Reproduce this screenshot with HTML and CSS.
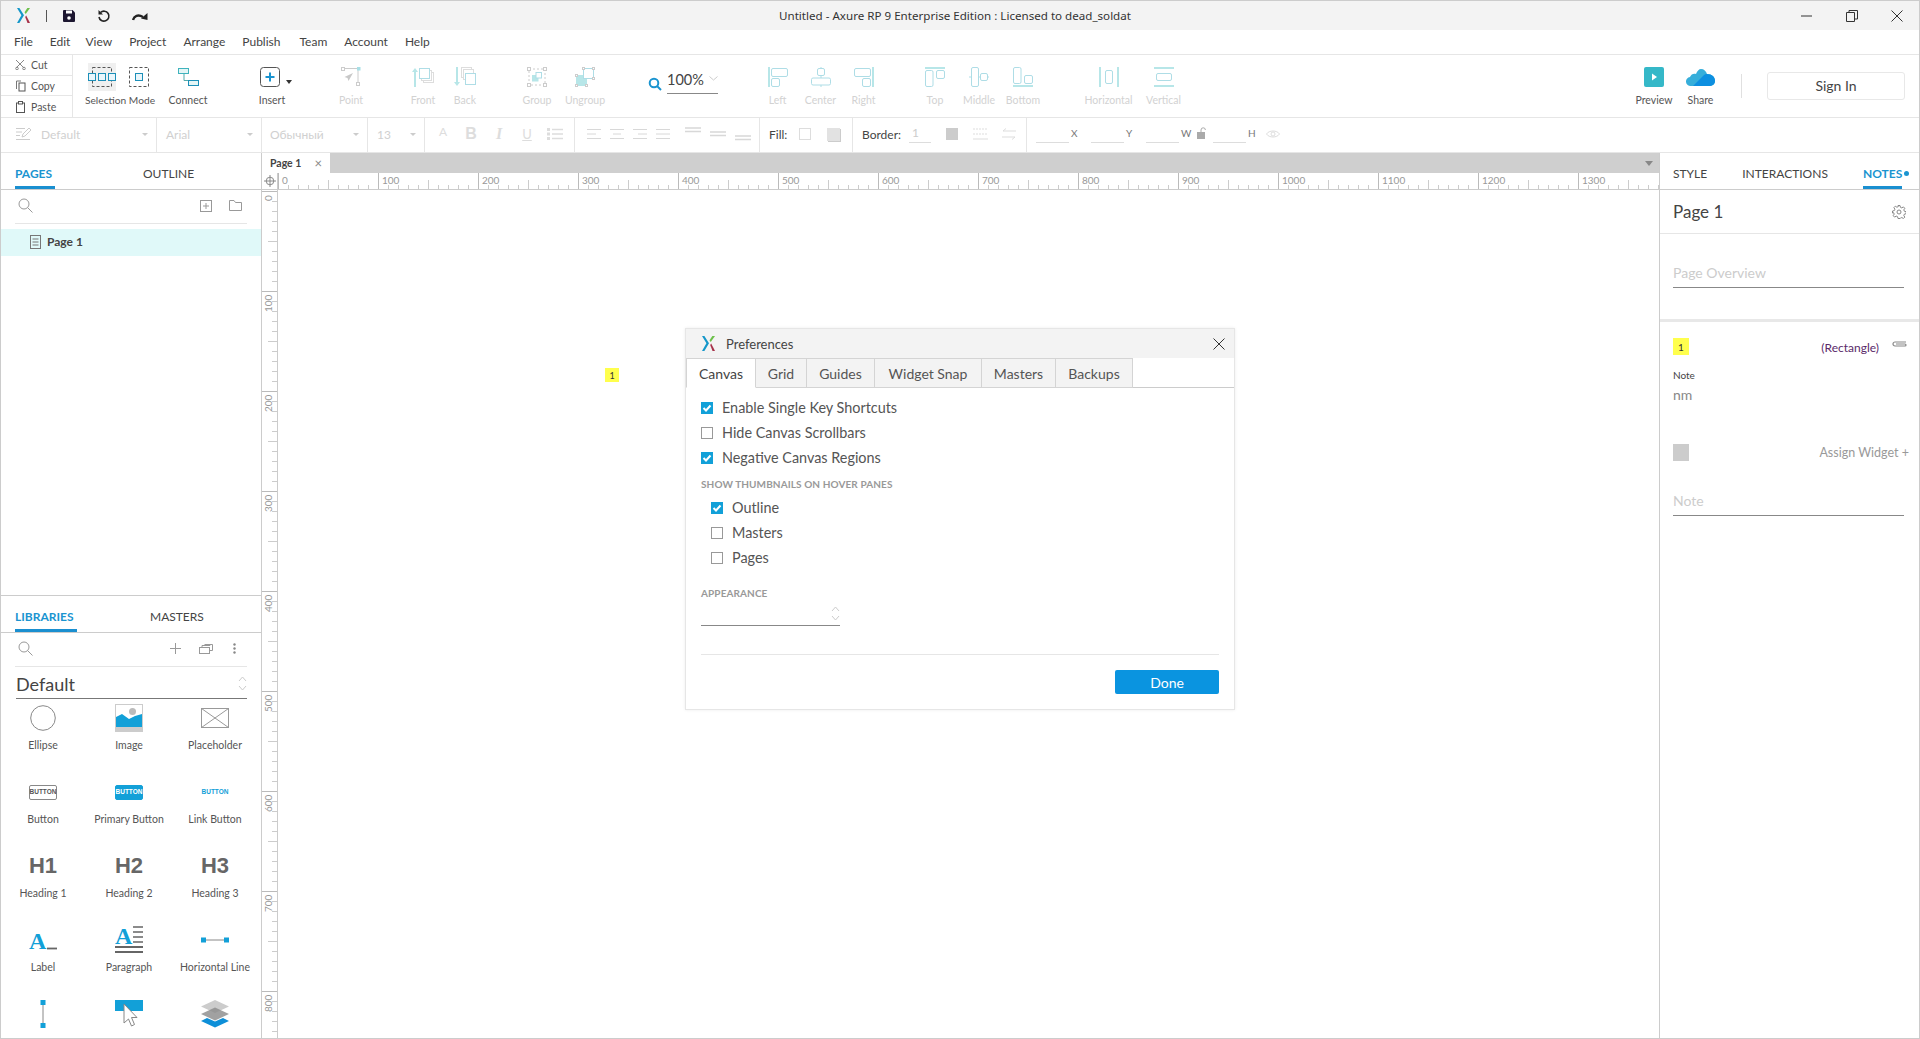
FILE: index.html
```html
<!DOCTYPE html>
<html lang="en">

<head>
  <meta charset="UTF-8">
  <title>Untitled - Axure RP 9</title>
  <link rel="stylesheet" href="styles.css">
</head>

<body>
  <div class="window">
    <header class="titlebar">
      <svg class="logo" width="13" height="15" viewBox="0 0 13 15"><path d="M0 0h2.400L7 7.300 2.400 15H0l4.400-7.700z" fill="#1597c9"/><path d="M10.400 0H13L8.700 6 7.500 4.300z" fill="#6cc04a"/><path d="M8.200 9l1-1.500L13 15h-2.500z" fill="#a8324a"/></svg>
      <span class="title-sep"></span>
      <svg class="tb-save" width="14" height="14" viewBox="0 0 14 14"><path d="M2 1h8.500L13 3.500V12a1 1 0 0 1-1 1H2a1 1 0 0 1-1-1V2a1 1 0 0 1 1-1z" fill="#1c1630"/><rect x="4" y="1.500" width="6" height="3" fill="#fff"/><circle cx="7" cy="9" r="1.800" fill="#fff"/></svg>
      <svg class="tb-undo" width="14" height="14" viewBox="0 0 14 14"><path d="M3.500 3.500A5 5 0 1 1 2 8" fill="none" stroke="#222" stroke-width="1.600"/><path d="M1.500 1v4.500H6z" fill="#222"/></svg>
      <svg class="tb-redo" width="16" height="10" viewBox="0 0 16 10"><path d="M1 9c1-4 5-6 10-3" fill="none" stroke="#222" stroke-width="2.400"/><path d="M15.500 9V2L9 7.500z" fill="#222"/></svg>
      <span class="title-text">Untitled - Axure RP 9 Enterprise Edition : Licensed to dead_soldat</span>
      <div class="win-controls">
        <svg width="12" height="12" viewBox="0 0 12 12"><path d="M0 6h11" stroke="#333"/></svg>
        <svg width="12" height="12" viewBox="0 0 12 12"><path d="M.5 2.500h8v9h-8zM3 2.500V.5h8.500v8.500H8.500" fill="none" stroke="#333"/></svg>
        <svg width="12" height="12" viewBox="0 0 12 12"><path d="M.5.500l11 11M11.500.5l-11 11" stroke="#333"/></svg>
      </div>
    </header>

    <nav class="menubar">
      <a>File</a><a>Edit</a><a>View</a><a>Project</a><a>Arrange</a><a>Publish</a><a>Team</a><a>Account</a><a>Help</a>
    </nav>

    <div class="toolbar">
      <div class="clipboard">
        <div class="clip-row"><svg width="12" height="11" viewBox="0 0 12 11"><path d="M1 1l8 8M9 1L1 9" stroke="#888" fill="none"/><circle cx="2" cy="9.500" r="1.300" fill="none" stroke="#888"/><circle cx="9" cy="9.500" r="1.300" fill="none" stroke="#888"/></svg>Cut</div>
        <div class="clip-row"><svg width="12" height="12" viewBox="0 0 12 12"><path d="M1.500 9V1H6" fill="none" stroke="#777"/><rect x="4" y="3" width="6" height="8" fill="none" stroke="#555"/></svg>Copy</div>
        <div class="clip-row"><svg width="12" height="12" viewBox="0 0 12 12"><rect x="1.500" y="2" width="8" height="9.500" fill="none" stroke="#555"/><rect x="3.500" y=".5" width="4" height="2.500" fill="#fff" stroke="#555"/></svg>Paste</div>
      </div>

      <div class="tool tool-select">
        <div class="tool-icon">
          <span class="active-mode">
            <svg width="28" height="20" viewBox="0 0 28 20"><rect x="4.500" y=".5" width="19" height="19" fill="none" stroke="#555" stroke-dasharray="3 2"/><g fill="#eaf6fb" stroke="#1c8fb8"><rect x=".5" y="6.500" width="7" height="7"/><rect x="10.500" y="6.500" width="7" height="7"/><rect x="20.500" y="6.500" width="7" height="7"/></g></svg>
          </span>
          <svg class="second-mode" width="20" height="20" viewBox="0 0 20 20"><rect x=".5" y=".5" width="19" height="19" fill="none" stroke="#555" stroke-dasharray="3 2"/><rect x="6.500" y="6.500" width="7" height="7" fill="#eaf6fb" stroke="#1c8fb8"/></svg>
        </div>
        <span class="tool-label">Selection Mode</span>
      </div>
      <div class="tool tool-connect">
        <div class="tool-icon"><svg width="21" height="19" viewBox="0 0 21 19"><path d="M6 6v6.500h9" fill="none" stroke="#5aa"/><rect x=".5" y=".5" width="10" height="5" fill="#e4f6f6" stroke="#3fb3bd"/><rect x="10.500" y="12.500" width="10" height="5" fill="#e4f6f6" stroke="#1c8fb8"/></svg></div>
        <span class="tool-label">Connect</span>
      </div>
      <div class="tool tool-insert">
        <div class="tool-icon">
          <svg width="20" height="20" viewBox="0 0 20 20"><rect x=".5" y=".5" width="19" height="19" rx="3" fill="none" stroke="#555"/><path d="M10 5.500v9M5.500 10h9" stroke="#1a94d0" stroke-width="2"/></svg>
          <span class="insert-caret"></span>
        </div>
        <span class="tool-label">Insert</span>
      </div>
      <div class="tool tool-point off">
        <div class="tool-icon"><svg width="20" height="20" viewBox="0 0 20 20"><path d="M3 1.500h14v14" fill="none" stroke="#ccc"/><rect x=".5" y=".5" width="3" height="3" fill="#fff" stroke="#ccc"/><rect x="16" y="0" width="3.500" height="3.500" fill="#a8dfe6"/><rect x="15.500" y="15.500" width="3" height="3" fill="#fff" stroke="#ccc"/><path d="M12 6L3.500 10l3 1 1 3z" fill="#c8c8c8"/></svg></div>
        <span class="tool-label">Point</span>
      </div>
      <div class="tool tool-front off">
        <div class="tool-icon"><svg width="22" height="22" viewBox="0 0 22 22"><path d="M3 21V4" stroke="#b7e6e8" stroke-width="2"/><path d="M0 6l3-4 3 4z" fill="#b7e6e8"/><rect x="11.500" y="6.500" width="10" height="10" fill="none" stroke="#ddd"/><rect x="9.500" y="4.500" width="10" height="10" fill="#fff" stroke="#ddd"/><rect x="7.500" y="2.500" width="10" height="10" fill="#fff" stroke="#aedde6"/></svg></div>
        <span class="tool-label">Front</span>
      </div>
      <div class="tool tool-back off">
        <div class="tool-icon"><svg width="22" height="22" viewBox="0 0 22 22"><path d="M3 1v17" stroke="#b7e6e8" stroke-width="2"/><path d="M0 16l3 4 3-4z" fill="#b7e6e8"/><rect x="7.500" y="1.500" width="10" height="10" fill="none" stroke="#ddd"/><rect x="9.500" y="3.500" width="10" height="10" fill="#fff" stroke="#ddd"/><rect x="11.500" y="7.500" width="10" height="11" fill="#fff" stroke="#aedde6"/></svg></div>
        <span class="tool-label">Back</span>
      </div>
      <div class="tool tool-group off">
        <div class="tool-icon"><svg width="20" height="20" viewBox="0 0 20 20"><rect x="2" y="2" width="16" height="16" fill="none" stroke="#ccc" stroke-dasharray="2 2"/><g fill="#fff" stroke="#ccc"><rect x=".5" y=".5" width="3" height="3"/><rect x="16.500" y=".5" width="3" height="3"/><rect x=".5" y="16.500" width="3" height="3"/><rect x="16.500" y="16.500" width="3" height="3"/></g><rect x="5" y="8" width="6.500" height="6.500" fill="#b7e6e8"/><rect x="9" y="5.500" width="5.500" height="5.500" fill="#fff" stroke="#aedde6"/></svg></div>
        <span class="tool-label">Group</span>
      </div>
      <div class="tool tool-ungroup off">
        <div class="tool-icon"><svg width="20" height="20" viewBox="0 0 20 20"><rect x="1" y="8" width="11" height="11" fill="#b7e6e8"/><rect x="8.500" y="1.500" width="10" height="10" fill="#fff" stroke="#aedde6"/><g fill="#fff" stroke="#ccc"><rect x="7.500" y=".5" width="2" height="2"/><rect x="17.500" y=".5" width="2" height="2"/><rect x="17.500" y="10.500" width="2" height="2"/><rect x=".5" y="7.500" width="2" height="2"/><rect x="10.500" y="17.500" width="2" height="2"/><rect x=".5" y="17.500" width="2" height="2"/></g></svg></div>
        <span class="tool-label">Ungroup</span>
      </div>

      <div class="zoom-box">
        <svg width="14" height="14" viewBox="0 0 14 14"><circle cx="6" cy="6" r="4.300" fill="none" stroke="#1a94d0" stroke-width="2"/><path d="M9 9l4 4" stroke="#1a94d0" stroke-width="2"/></svg>
        <div class="zoom-value">100%<svg width="9" height="5" viewBox="0 0 9 5"><path d="M.5.500l4 3.500 4-3.500" fill="none" stroke="#ccc"/></svg></div>
      </div>

      <div class="tool tool-left off">
        <div class="tool-icon"><svg width="20" height="20" viewBox="0 0 20 20"><path d="M1 0v20" stroke="#b7e6e8" stroke-width="2"/><rect x="3.500" y="1.500" width="16" height="8" rx="1.500" fill="none" stroke="#aedde6"/><rect x="3.500" y="11.500" width="8" height="8" rx="1.500" fill="none" stroke="#aedde6"/></svg></div>
        <span class="tool-label">Left</span>
      </div>
      <div class="tool tool-left off">
        <div class="tool-icon"><svg width="20" height="20" viewBox="0 0 20 20"><path d="M10 0v20" stroke="#aedde6"/><rect x="6.500" y="1.500" width="7" height="7" rx="1.500" fill="#fff" stroke="#aedde6"/><rect x=".5" y="11" width="19" height="7" rx="1.500" fill="#fff" stroke="#aedde6"/></svg></div>
        <span class="tool-label">Center</span>
      </div>
      <div class="tool tool-left off">
        <div class="tool-icon"><svg width="20" height="20" viewBox="0 0 20 20"><path d="M19 0v20" stroke="#b7e6e8" stroke-width="2"/><rect x=".5" y="1.500" width="16" height="8" rx="1.500" fill="none" stroke="#aedde6"/><rect x="8.500" y="11.500" width="8" height="8" rx="1.500" fill="none" stroke="#aedde6"/></svg></div>
        <span class="tool-label">Right</span>
      </div>
      <div class="tool tool-top off">
        <div class="tool-icon"><svg width="20" height="20" viewBox="0 0 20 20"><path d="M0 1h20" stroke="#b7e6e8" stroke-width="2"/><rect x=".5" y="3.500" width="7.500" height="16" rx="1.500" fill="none" stroke="#aedde6"/><rect x="11.500" y="3.500" width="8" height="8" rx="1.500" fill="none" stroke="#aedde6"/></svg></div>
        <span class="tool-label">Top</span>
      </div>
      <div class="tool tool-middle off">
        <div class="tool-icon"><svg width="20" height="20" viewBox="0 0 20 20"><path d="M0 10h20" stroke="#aedde6"/><rect x="2.500" y=".5" width="7" height="19" rx="1.500" fill="#fff" stroke="#aedde6"/><rect x="11.500" y="6.500" width="7" height="7" rx="1.500" fill="#fff" stroke="#aedde6"/></svg></div>
        <span class="tool-label">Middle</span>
      </div>
      <div class="tool tool-top off">
        <div class="tool-icon"><svg width="20" height="20" viewBox="0 0 20 20"><path d="M0 19h20" stroke="#b7e6e8" stroke-width="2"/><rect x=".5" y=".5" width="7.500" height="16" rx="1.500" fill="none" stroke="#aedde6"/><rect x="11.500" y="8.500" width="8" height="8" rx="1.500" fill="none" stroke="#aedde6"/></svg></div>
        <span class="tool-label">Bottom</span>
      </div>
      <div class="tool tool-horizontal off">
        <div class="tool-icon"><svg width="20" height="20" viewBox="0 0 20 20"><path d="M1 0v20M19 0v20" stroke="#b7e6e8" stroke-width="2"/><rect x="6.500" y="3.500" width="7" height="13" rx="1.500" fill="none" stroke="#aedde6"/></svg></div>
        <span class="tool-label">Horizontal</span>
      </div>
      <div class="tool tool-horizontal off">
        <div class="tool-icon"><svg width="20" height="20" viewBox="0 0 20 20"><path d="M0 1h20M0 19h20" stroke="#b7e6e8" stroke-width="2"/><rect x="2.500" y="6.500" width="15" height="7" rx="1.500" fill="none" stroke="#aedde6"/></svg></div>
        <span class="tool-label">Vertical</span>
      </div>

      <div class="tool tool-preview">
        <div class="tool-icon"><svg width="20" height="20" viewBox="0 0 20 20"><rect width="20" height="20" rx="2" fill="#35b8c8"/><path d="M8 6.500l5 3.500-5 3.500z" fill="#fff"/></svg></div>
        <span class="tool-label">Preview</span>
      </div>
      <div class="tool tool-share">
        <div class="tool-icon"><svg width="30" height="20" viewBox="0 0 30 20"><path d="M5 19a4.500 4.500 0 0 1-1-9c1-3 4-4 6-3 1-3 3-5 5-5 3 0 5 2 6 5 5 0 8 3 8 7a5 5 0 0 1-5 5z" fill="#36aeda"/><path d="M7 19l10-10c2-2 3-2 4-2 5 0 8 3 8 7a5 5 0 0 1-5 5z" fill="#0d8fe0"/></svg></div>
        <span class="tool-label">Share</span>
      </div>
      <span class="toolbar-sep"></span>
      <button class="sign-in">Sign In</button>
    </div>

    <div class="formatbar">
      <div class="fmt-select fmt-style">
        <svg width="16" height="14" viewBox="0 0 16 14"><path d="M0 1.500h9M0 5h6M0 8.500h4M0 12.500h14" stroke="#ccc"/><path d="M6 10l1-3 6-6 2 2-6 6z" fill="#fff" stroke="#ccc"/></svg>
        <span>Default</span><i class="caret"></i>
      </div>
      <div class="fmt-select fmt-font"><span>Arial</span><i class="caret"></i></div>
      <div class="fmt-select fmt-weight"><span>Обычный</span><i class="caret"></i></div>
      <div class="fmt-select fmt-size"><span>13</span><i class="caret"></i></div>

      <div class="fmt-text">
        <span class="fmt-a">A</span>
        <span class="fmt-b">B</span>
        <span class="fmt-i">I</span>
        <span class="fmt-u">U</span>
        <span><svg width="16" height="12" viewBox="0 0 16 12"><path d="M0 1.500h3M0 6h3M0 10.500h3" stroke="#ddd" stroke-width="3"/><path d="M5 1.500h11M5 6h11M5 10.500h11" stroke="#ddd" stroke-width="1.500"/></svg></span>
      </div>

      <div class="fmt-align">
        <svg width="14" height="10" viewBox="0 0 14 10"><path d="M0 .5h14M0 5h9M0 9.500h14" stroke="#d8d8d8"/></svg>
        <svg width="14" height="10" viewBox="0 0 14 10"><path d="M0 .5h14M3 5h8M0 9.500h14" stroke="#d8d8d8"/></svg>
        <svg width="14" height="10" viewBox="0 0 14 10"><path d="M0 .5h14M5 5h9M0 9.500h14" stroke="#d8d8d8"/></svg>
        <svg width="14" height="10" viewBox="0 0 14 10"><path d="M0 .5h14M0 5h14M0 9.500h14" stroke="#d8d8d8"/></svg>
        <svg class="valign-top" width="16" height="6" viewBox="0 0 16 6"><path d="M0 1h16M0 4.500h16" stroke="#d8d8d8" stroke-width="1.300"/></svg>
        <svg width="16" height="6" viewBox="0 0 16 6"><path d="M0 1h16M0 4.500h16" stroke="#d8d8d8" stroke-width="1.300"/></svg>
        <svg class="valign-bottom" width="16" height="6" viewBox="0 0 16 6"><path d="M0 1h16M0 4.500h16" stroke="#d8d8d8" stroke-width="1.300"/></svg>
      </div>

      <div class="fmt-fill">
        <span class="fmt-label">Fill:</span>
        <span class="fill-box"></span>
        <span class="fill-shadow"></span>
      </div>

      <div class="fmt-border">
        <span class="fmt-label">Border:</span>
        <span class="border-width">1</span>
        <span class="border-color"></span>
        <svg width="15" height="12" viewBox="0 0 15 12"><path d="M0 1h15M0 6h15" stroke="#ddd" stroke-dasharray="2 1"/><path d="M0 11h15" stroke="#ddd"/></svg>
        <svg class="border-arrows" width="14" height="12" viewBox="0 0 14 12"><path d="M14 3H1l3-2.500M0 9h13l-3 2.500" fill="none" stroke="#ddd"/></svg>
      </div>

      <div class="fmt-geom">
        <span class="geom-input"></span><span class="geom-label">X</span>
        <span class="geom-input"></span><span class="geom-label">Y</span>
        <span class="geom-input"></span><span class="geom-label">W</span>
        <svg class="lock" width="10" height="12" viewBox="0 0 10 12"><rect y="5" width="8" height="7" fill="#aaa"/><path d="M4 5V3a2.200 2.200 0 0 1 4.400 0" fill="none" stroke="#aaa"/></svg>
        <span class="geom-input"></span><span class="geom-label">H</span>
        <svg class="eye" width="14" height="10" viewBox="0 0 14 10"><path d="M.5 5C3 1 11 1 13.500 5 11 9 3 9 .5 5z" fill="none" stroke="#ddd"/><circle cx="7" cy="5" r="2" fill="none" stroke="#ddd"/></svg>
      </div>
    </div>

    <main class="workspace">
      <aside class="left-panel">
        <section class="pages-pane">
          <div class="panel-tabs">
            <a class="panel-tab active pages-tab">PAGES</a>
            <a class="panel-tab">OUTLINE</a>
          </div>
          <div class="search-row">
            <svg width="15" height="15" viewBox="0 0 15 15"><circle cx="6" cy="6" r="5" fill="none" stroke="#999"/><path d="M9.500 9.500l5 5" stroke="#999"/></svg>
            <svg class="search-add" width="12" height="12" viewBox="0 0 12 12"><rect x=".5" y=".5" width="11" height="11" fill="none" stroke="#999"/><path d="M6 3v6M3 6h6" stroke="#999"/></svg>
            <svg class="search-folder" width="13" height="11" viewBox="0 0 13 11"><path d="M.5.500h4.500l1.500 2h6v8H.5z" fill="none" stroke="#999"/></svg>
          </div>
          <div class="page-row">
            <svg width="11" height="14" viewBox="0 0 11 14"><rect x=".5" y=".5" width="10" height="13" fill="none" stroke="#777"/><path d="M2.500 4h6M2.500 7h6M2.500 10h6" stroke="#777"/></svg>
            Page 1
          </div>
        </section>

        <section class="libs-pane">
          <div class="panel-tabs">
            <a class="panel-tab active libs-tab">LIBRARIES</a>
            <a class="panel-tab">MASTERS</a>
          </div>
          <div class="search-row">
            <svg width="15" height="15" viewBox="0 0 15 15"><circle cx="6" cy="6" r="5" fill="none" stroke="#999"/><path d="M9.500 9.500l5 5" stroke="#999"/></svg>
            <svg class="lib-add" width="11" height="11" viewBox="0 0 11 11"><path d="M5.500 0v11M0 5.500h11" stroke="#999"/></svg>
            <svg class="lib-copy" width="14" height="10" viewBox="0 0 14 10"><rect x=".5" y="3.500" width="10" height="6" fill="#fff" stroke="#999"/><path d="M3 3V1.500h8V2M5.500.5h8v6h-3" fill="none" stroke="#999"/></svg>
            <svg class="lib-more" width="3" height="11" viewBox="0 0 3 11"><circle cx="1.500" cy="1.500" r="1.200" fill="#888"/><circle cx="1.500" cy="5.500" r="1.200" fill="#888"/><circle cx="1.500" cy="9.500" r="1.200" fill="#888"/></svg>
          </div>
          <div class="lib-select">
            Default
            <svg width="9" height="15" viewBox="0 0 9 15"><path d="M1 5l3.500-4L8 5M1 10l3.500 4L8 10" fill="none" stroke="#ccc"/></svg>
          </div>

          <div class="widget-grid">
            <div class="widget">
              <div class="widget-icon"><svg width="26" height="26" viewBox="0 0 26 26"><circle cx="13" cy="13" r="12.300" fill="none" stroke="#888"/></svg></div>
              <span>Ellipse</span>
            </div>
            <div class="widget">
              <div class="widget-icon"><svg width="28" height="28" viewBox="0 0 28 28"><rect x=".5" y=".5" width="27" height="27" fill="#fff" stroke="#ccc"/><rect y="23" width="28" height="5" fill="#ccc"/><circle cx="17.500" cy="7.500" r="3.500" fill="#bbb"/><path d="M1 23V13l6-3 7 5 6-3 7-2v13z" fill="#12a0d8"/></svg></div>
              <span>Image</span>
            </div>
            <div class="widget">
              <div class="widget-icon"><svg width="28" height="20" viewBox="0 0 28 20"><rect x=".5" y=".5" width="27" height="19" fill="#fff" stroke="#999"/><path d="M.5.500l27 19M27.500.5l-27 19" stroke="#999"/></svg></div>
              <span>Placeholder</span>
            </div>
            <div class="widget">
              <div class="widget-icon"><b class="btn-icon">BUTTON</b></div>
              <span>Button</span>
            </div>
            <div class="widget">
              <div class="widget-icon"><b class="btn-icon btn-primary">BUTTON</b></div>
              <span>Primary Button</span>
            </div>
            <div class="widget">
              <div class="widget-icon"><b class="btn-icon btn-link">BUTTON</b></div>
              <span>Link Button</span>
            </div>
            <div class="widget">
              <div class="widget-icon heading">H1</div>
              <span>Heading 1</span>
            </div>
            <div class="widget">
              <div class="widget-icon heading">H2</div>
              <span>Heading 2</span>
            </div>
            <div class="widget">
              <div class="widget-icon heading">H3</div>
              <span>Heading 3</span>
            </div>
            <div class="widget">
              <div class="widget-icon"><svg width="28" height="30" viewBox="0 -4 28 30"><text x="0" y="20" class="serif-a">A</text><path d="M18 19.500h10" stroke="#666" stroke-width="1.800"/></svg></div>
              <span>Label</span>
            </div>
            <div class="widget">
              <div class="widget-icon"><svg width="28" height="36" viewBox="0 -4 28 36"><text x="0" y="18" class="serif-a">A</text><path d="M18 1h10M18 6h10M18 11h10M18 16h10" stroke="#666" stroke-width="1.300"/><path d="M0 21h28M0 26h28" stroke="#666" stroke-width="1.800"/></svg></div>
              <span>Paragraph</span>
            </div>
            <div class="widget">
              <div class="widget-icon"><svg width="28" height="6" viewBox="0 0 28 6"><path d="M4 3h20" stroke="#888"/><rect width="5" height="5" y=".5" fill="#12a0d8"/><rect x="23" y=".5" width="5" height="5" fill="#12a0d8"/></svg></div>
              <span>Horizontal Line</span>
            </div>
            <div class="widget">
              <div class="widget-icon"><svg width="6" height="28" viewBox="0 0 6 28"><path d="M3 4v20" stroke="#888"/><rect x=".5" width="5" height="5" fill="#12a0d8"/><rect x=".5" y="23" width="5" height="5" fill="#12a0d8"/></svg></div>
            </div>
            <div class="widget">
              <div class="widget-icon"><svg width="28" height="28" viewBox="0 0 28 28"><rect width="28" height="11" fill="#12a0d8"/><path d="M9 4v19l4.500-4 3 7 3-1.500-3-7H22z" fill="#fff" stroke="#888"/></svg></div>
            </div>
            <div class="widget">
              <div class="widget-icon"><svg width="28" height="28" viewBox="0 0 28 28"><path d="M14 0l14 6.500-14 6.500L0 6.500z" fill="#ccc"/><path d="M14 7.500l14 6.500-14 6.500L0 14z" fill="#8a8a8a" fill-opacity=".8"/><path d="M0 21l6-3 8 3.500 8-3.500 6 3-14 6.500z" fill="#0d8fd8"/></svg></div>
            </div>
          </div>
        </section>
      </aside>

      <div class="center-pane">
        <div class="doc-tabs">
          <div class="doc-tab">Page 1<span class="doc-close">×</span></div>
          <i class="doc-menu"></i>
        </div>
        <div class="ruler-row">
          <div class="ruler-corner">
            <svg width="12" height="12" viewBox="0 0 12 12"><circle cx="6" cy="6" r="3.800" fill="none" stroke="#888"/><path d="M6 0v12M0 6h12" stroke="#888"/></svg>
          </div>
          <div class="ruler-h">
            <span>0</span><span>100</span><span>200</span><span>300</span><span>400</span><span>500</span><span>600</span><span>700</span><span>800</span><span>900</span><span>1000</span><span>1100</span><span>1200</span><span>1300</span>
          </div>
        </div>
        <div class="canvas-row">
          <div class="ruler-v">
            <span><em>0</em></span><span><em>100</em></span><span><em>200</em></span><span><em>300</em></span><span><em>400</em></span><span><em>500</em></span><span><em>600</em></span><span><em>700</em></span><span><em>800</em></span>
          </div>
          <div class="canvas">
            <span class="note-badge canvas-badge">1</span>

            <div class="dialog">
              <div class="dialog-title">
                <svg width="13" height="15" viewBox="0 0 13 15"><path d="M0 0h2.400L7 7.300 2.400 15H0l4.400-7.700z" fill="#1597c9"/><path d="M10.400 0H13L8.700 6 7.500 4.300z" fill="#6cc04a"/><path d="M8.200 9l1-1.500L13 15h-2.500z" fill="#a8324a"/></svg>
                <span>Preferences</span>
                <svg class="dialog-close" width="12" height="12" viewBox="0 0 12 12"><path d="M.5.500l11 11M11.500.5l-11 11" stroke="#333"/></svg>
              </div>
              <div class="dialog-tabs">
                <a class="dialog-tab active w-canvas">Canvas</a>
                <a class="dialog-tab w-grid">Grid</a>
                <a class="dialog-tab w-guides">Guides</a>
                <a class="dialog-tab w-snap">Widget Snap</a>
                <a class="dialog-tab w-masters">Masters</a>
                <a class="dialog-tab w-backups">Backups</a>
              </div>
              <div class="dialog-body">
                <label class="check-row"><span class="check on"><svg width="12" height="12" viewBox="0 0 12 12"><path d="M2.500 6l2.500 2.500 4.500-5" fill="none" stroke="#fff" stroke-width="2"/></svg></span>Enable Single Key Shortcuts</label>
                <label class="check-row"><span class="check"></span>Hide Canvas Scrollbars</label>
                <label class="check-row"><span class="check on"><svg width="12" height="12" viewBox="0 0 12 12"><path d="M2.500 6l2.500 2.500 4.500-5" fill="none" stroke="#fff" stroke-width="2"/></svg></span>Negative Canvas Regions</label>
                <div class="dialog-heading thumbs-heading">SHOW THUMBNAILS ON HOVER PANES</div>
                <div class="sub-checks">
                  <label class="check-row"><span class="check on"><svg width="12" height="12" viewBox="0 0 12 12"><path d="M2.500 6l2.500 2.500 4.500-5" fill="none" stroke="#fff" stroke-width="2"/></svg></span>Outline</label>
                  <label class="check-row"><span class="check"></span>Masters</label>
                  <label class="check-row"><span class="check"></span>Pages</label>
                </div>
                <div class="dialog-heading appearance-heading">APPEARANCE</div>
                <div class="appearance-select">
                  <svg width="9" height="15" viewBox="0 0 9 15"><path d="M1 5l3.500-4L8 5M1 10l3.500 4L8 10" fill="none" stroke="#ccc"/></svg>
                </div>
                <div class="dialog-footer">
                  <button class="done-btn">Done</button>
                </div>
              </div>
            </div>
          </div>
        </div>
      </div>

      <aside class="right-panel">
        <div class="panel-tabs right-tabs">
          <a class="panel-tab">STYLE</a>
          <a class="panel-tab">INTERACTIONS</a>
          <a class="panel-tab active">NOTES</a>
          <i class="tab-dot"></i>
        </div>
        <div class="page-head">
          Page 1
          <svg width="14" height="14" viewBox="0 0 14 14"><path d="M6 .5h2l.4 1.800 1.400.6 1.600-1 1.400 1.400-1 1.600.6 1.400 1.800.4v2l-1.800.4-.6 1.400 1 1.600-1.400 1.400-1.600-1-1.400.6L8 13.500H6l-.4-1.800-1.400-.6-1.600 1-1.400-1.400 1-1.600-.6-1.400L.5 8V6l1.800-.4.6-1.400-1-1.600 1.400-1.400 1.600 1 1.400-.6z" fill="none" stroke="#888"/><circle cx="7" cy="7" r="2" fill="none" stroke="#888"/></svg>
        </div>
        <div class="overview-box">
          <div class="note-input">Page Overview</div>
        </div>
        <div class="note-block">
          <div class="note-head">
            <span class="note-badge">1</span>
            <span class="note-widget">(Rectangle)</span>
            <svg width="15" height="6" viewBox="0 0 15 6"><path d="M14 1H3a2 2 0 0 0 0 4h10a1 1 0 0 0 0-2H4" fill="none" stroke="#888" stroke-width="1.200"/></svg>
          </div>
          <div class="note-title">Note</div>
          <div class="note-value">nm</div>
          <div class="note-assign">
            <span class="note-swatch"></span>
            <span>Assign Widget +</span>
          </div>
          <div class="note-input note-empty">Note</div>
        </div>
      </aside>
    </main>
  </div>
</body>

</html>
```

FILE: styles.css
```css
* {
  margin: 0;
  padding: 0;
  box-sizing: border-box;
  font-family: 'Lato', 'Noto Sans', sans-serif;
}

html, body {
  height: 100%;
  overflow: hidden;
  background: white;
  color: #444;
}

svg {
  flex: none;
  display: block;
}

.window {
  height: 1039px;
  border: 1px solid #ccc;
  display: flex;
  flex-direction: column;
  overflow: hidden;
}

/* title bar */
.titlebar {
  height: 29px;
  flex: none;
  background: #f3f3f3;
  display: flex;
  align-items: center;
  position: relative;
  padding-left: 16px;
}

.title-sep {
  width: 1px;
  height: 12px;
  background: #555;
  margin-left: 16px;
}

.tb-save {
  margin-left: 15px;
}

.tb-undo {
  margin-left: 21px;
}

.tb-redo {
  margin-left: 21px;
}

.title-text {
  position: absolute;
  left: 778px;
  font-family: 'Noto Sans', sans-serif;
  font-size: 11.6px;
  color: #333;
}

.win-controls {
  margin-left: auto;
  padding-right: 16px;
  display: flex;
  gap: 33px;
}

/* menu */
.menubar {
  height: 25px;
  flex: none;
  border-bottom: 1px solid #e6e6e6;
  display: flex;
  align-items: center;
  gap: 17px;
  padding: 0 0 2px 13px;
  font-size: 12px;
  color: #444;
}

.menubar a:nth-child(3) {
  margin-left: -2px;
}

.menubar a:nth-child(7) {
  margin-left: 2px;
}

/* toolbar */
.toolbar {
  height: 63px;
  flex: none;
  border-bottom: 1px solid #e6e6e6;
  display: flex;
  align-items: flex-start;
}

.clipboard {
  width: 72px;
  height: 62px;
  flex: none;
  border-right: 1px solid #e6e6e6;
  display: flex;
  flex-direction: column;
}

.clip-row {
  height: 21px;
  border-bottom: 1px solid #e6e6e6;
  display: flex;
  align-items: center;
  gap: 4px;
  padding-left: 14px;
  font-size: 10.5px;
  color: #555;
}

.clip-row:last-child {
  border-bottom: none;
}

.tool {
  flex: none;
  padding-top: 8px;
  display: flex;
  flex-direction: column;
  align-items: center;
}

.tool-icon {
  height: 28px;
  display: flex;
  align-items: center;
  justify-content: center;
}

.tool-label {
  margin-top: 2px;
  line-height: 15px;
  font-size: 10.5px;
  color: #555;
  white-space: nowrap;
}

.tool.off .tool-label {
  color: #d2d2d2;
}

.tool-select {
  width: 70px;
  margin-left: 12px;
}

.tool-select .tool-label {
  font-size: 10.2px;
}

.tool-select .tool-icon {
  width: 70px;
  justify-content: flex-start;
  padding-left: 3px;
}

.active-mode {
  width: 28px;
  height: 28px;
  background: #f0f0f0;
  display: flex;
  align-items: center;
}

.second-mode {
  margin-left: 13px;
}

.tool-connect {
  width: 40px;
  margin-left: 13px;
}

.tool-insert {
  width: 44px;
  margin-left: 42px;
}

.tool-insert .tool-icon {
  position: relative;
  padding-right: 4px;
}

.insert-caret {
  position: absolute;
  left: 26px;
  top: 17px;
  border: 3.5px solid transparent;
  border-top: 4px solid #333;
  border-bottom: none;
}

.tool-point {
  width: 42px;
  margin-left: 36px;
}

.tool-front {
  width: 42px;
  margin-left: 30px;
}

.tool-back {
  width: 42px;
}

.tool-group {
  width: 48px;
  margin-left: 27px;
}

.tool-ungroup {
  width: 48px;
}

.zoom-box {
  width: 72px;
  flex: none;
  margin-left: 39px;
  margin-top: 10px;
  display: flex;
  align-items: flex-start;
  gap: 5px;
  padding-top: 7px;
}

.zoom-box svg:first-child {
  margin-top: 5px;
}

.zoom-value {
  width: 51px;
  height: 23px;
  margin-top: -1px;
  border-bottom: 1px solid #888;
  font-size: 14.5px;
  color: #444;
  display: flex;
  justify-content: space-between;
}

.zoom-value svg {
  margin-top: 15px;
}

.tool-left {
  width: 43px;
}

.zoom-box + .tool-left {
  margin-left: 36px;
}

.tool-top, .tool-middle {
  width: 44px;
}

.tool-left + .tool-top {
  margin-left: 28px;
}

.tool-horizontal {
  width: 55px;
}

.tool-top + .tool-horizontal {
  margin-left: 36px;
}

.tool-preview {
  width: 46px;
  margin-left: auto;
}

.tool-share {
  width: 47px;
}

.toolbar-sep {
  width: 1px;
  height: 24px;
  margin: 19px 25px 0 17px;
  background: #e0e0e0;
}

.sign-in {
  width: 138px;
  height: 28px;
  margin: 17px 14px 0 0;
  padding-bottom: 2px;
  background: white;
  border: 1px solid #e8e8e8;
  border-radius: 3px;
  font-size: 14px;
  color: #444;
}

/* format bar */
.formatbar {
  height: 35px;
  flex: none;
  border-bottom: 1px solid #e6e6e6;
  display: flex;
  color: #d0d0d0;
  font-size: 12px;
}

.formatbar > div {
  flex: none;
  display: flex;
  align-items: center;
  padding-bottom: 2px;
  border-right: 1px solid #e6e6e6;
}

.caret {
  margin-left: auto;
  margin-right: 8px;
  border: 3px solid transparent;
  border-top: 3px solid #ccc;
  border-bottom: none;
}

.fmt-style {
  width: 156px;
  padding-left: 15px;
  gap: 9px;
}

.fmt-font {
  width: 105px;
  padding-left: 9px;
}

.fmt-weight {
  width: 106px;
  padding-left: 8px;
}

.fmt-size {
  width: 57px;
  padding-left: 9px;
}

.fmt-text {
  width: 150px;
  padding-left: 4px;
}

.fmt-text span {
  width: 28px;
  display: flex;
  justify-content: center;
  color: #ddd;
  font-size: 16px;
}

.fmt-a {
  font-size: 12px !important;
  margin-top: -6px;
}

.fmt-b {
  font-family: 'Liberation Sans', sans-serif;
  font-weight: bold;
}

.fmt-i {
  font-family: 'Liberation Serif', serif;
  font-style: italic;
  font-weight: bold;
}

.fmt-u {
  text-decoration: underline;
  font-size: 13px !important;
}

.fmt-align {
  width: 185px;
  padding-left: 12px;
  gap: 9px;
}

.valign-top {
  margin-left: 6px;
  margin-top: -9px;
}

.valign-bottom {
  margin-top: 8px;
}

.fmt-label {
  color: #444;
  font-size: 12px;
}

.fmt-fill {
  width: 93px;
  padding-left: 9px;
}

.fill-box {
  width: 12px;
  height: 12px;
  margin-left: 12px;
  border: 1px solid #ddd;
}

.fill-shadow {
  width: 13px;
  height: 13px;
  margin-left: 16px;
  background: #e2e2e2;
  box-shadow: 1px 1px 0 #ccc;
}

.fmt-border {
  width: 174px;
  padding-left: 9px;
}

.border-width {
  width: 22px;
  margin-left: 8px;
  height: 18px;
  padding-left: 3px;
  border-bottom: 1px solid #ddd;
  line-height: 16px;
  color: #ccc;
}

.border-color {
  width: 12px;
  height: 12px;
  margin: 0 15px 0 15px;
  background: #ccc;
}

.border-arrows {
  margin-left: 14px;
}

.fmt-geom {
  border-right: none !important;
  padding-left: 9px;
}

.geom-input {
  width: 33px;
  height: 18px;
  border-bottom: 1px solid #ddd;
}

.geom-label {
  width: 22px;
  padding: 0 0 2px 2px;
  color: #777;
  font-size: 10px;
}

.lock {
  margin: -3px 0 0 -4px;
}

.lock + .geom-input {
  margin-left: 6px;
}

.lock + .geom-input + .geom-label {
  width: 20px;
}

/* workspace */
.workspace {
  flex: 1;
  min-height: 0;
  display: flex;
}

.left-panel {
  width: 261px;
  flex: none;
  border-right: 1px solid #ccc;
  display: flex;
  flex-direction: column;
}

.pages-pane {
  flex: 1;
}

.panel-tabs {
  height: 37px;
  display: flex;
  padding-left: 14px;
  border-bottom: 1px solid #ccc;
}

.panel-tab {
  height: 36px;
  padding-top: 14px;
  border-bottom: 3px solid transparent;
  font-size: 12px;
  color: #444;
  line-height: 14px;
}

.panel-tab.active {
  color: #1a94d0;
  font-weight: bold;
  border-bottom-color: #1a8fd0;
}

.pages-tab {
  width: 40px;
  margin-right: 88px;
}

.libs-tab {
  width: 62px;
  margin-right: 73px;
}

.search-row {
  height: 34px;
  margin: 0 14px;
  padding: 0 0 2px 3px;
  border-bottom: 1px solid #e6e6e6;
  display: flex;
  align-items: center;
}

.search-add {
  margin-left: 167px;
}

.search-folder {
  margin-left: 17px;
}

.lib-add {
  margin-left: 137px;
}

.lib-copy {
  margin-left: 18px;
}

.lib-more {
  margin-left: 20px;
}

.page-row {
  height: 27px;
  margin-top: 5px;
  padding: 0 0 2px 29px;
  display: flex;
  align-items: center;
  gap: 6px;
  background: #e0f9f9;
  font-size: 12px;
  font-weight: bold;
  color: #444;
}

.libs-pane {
  height: 443px;
  flex: none;
  border-top: 1px solid #ccc;
  overflow: hidden;
}

.lib-select {
  height: 32px;
  margin: 0 14px 0 15px;
  padding-top: 2px;
  border-bottom: 1px solid #777;
  display: flex;
  align-items: center;
  justify-content: space-between;
  font-size: 18px;
  color: #444;
}

.widget-grid {
  display: grid;
  grid-template-columns: repeat(3, 86px);
  grid-auto-rows: 74px;
  margin-left: -1px;
}

.widget {
  display: flex;
  flex-direction: column;
  align-items: center;
  font-size: 10.5px;
  color: #555;
  line-height: 16px;
  white-space: nowrap;
}

.widget-icon {
  height: 38px;
  flex: none;
  display: flex;
  align-items: center;
  justify-content: center;
}

.btn-icon {
  width: 28px;
  height: 15px;
  border: 1px solid #888;
  border-radius: 2px;
  display: flex;
  align-items: center;
  justify-content: center;
  font-family: 'Liberation Sans', sans-serif;
  font-size: 6.5px;
  color: #555;
}

.btn-primary {
  background: #12a0d8;
  border-color: #12a0d8;
  color: white;
}

.btn-link {
  border-color: transparent;
  color: #12a0d8;
}

.heading {
  font-family: 'Liberation Sans', sans-serif;
  font-size: 22px;
  font-weight: bold;
  color: #666;
}

.serif-a {
  font-family: 'Liberation Serif', serif;
  font-size: 24px;
  font-weight: bold;
  fill: #12a0d8;
}

/* center */
.center-pane {
  flex: 1;
  min-width: 0;
  display: flex;
  flex-direction: column;
}

.doc-tabs {
  height: 20px;
  flex: none;
  background: #cfcfcf;
  display: flex;
  align-items: center;
}

.doc-tab {
  width: 68px;
  height: 20px;
  background: white;
  display: flex;
  align-items: center;
  padding-left: 8px;
  font-size: 10.5px;
  font-weight: bold;
  color: #444;
}

.doc-close {
  margin-left: 13px;
  font-size: 13px;
  font-weight: normal;
  color: #888;
}

.doc-menu {
  margin-left: auto;
  margin-right: 6px;
  border: 4px solid transparent;
  border-top: 5px solid #888;
  border-bottom: none;
}

.ruler-row {
  height: 17px;
  flex: none;
  display: flex;
  border-bottom: 1px solid #ccc;
}

.ruler-corner {
  width: 16px;
  flex: none;
  border-right: 1px solid #ccc;
  display: flex;
  align-items: center;
  justify-content: center;
}

.ruler-h {
  flex: 1;
  display: flex;
  overflow: hidden;
}

.ruler-h span {
  flex: 0 0 100px;
  padding-left: 4px;
  font-size: 10px;
  line-height: 14px;
  color: #999;
  background:
    linear-gradient(#bbb, #bbb) 0 0 / 1px 100% no-repeat,
    linear-gradient(#ccc, #ccc) 50px 100% / 1px 9px no-repeat,
    repeating-linear-gradient(90deg, #ccc 0 1px, transparent 1px 10px) 0 100% / 100% 4px no-repeat;
}

.canvas-row {
  flex: 1;
  min-height: 0;
  display: flex;
}

.ruler-v {
  width: 16px;
  flex: none;
  padding-top: 1px;
  border-right: 1px solid #ccc;
  overflow: hidden;
}

.ruler-v span {
  display: block;
  height: 100px;
  padding-top: 4px;
  background:
    linear-gradient(#bbb, #bbb) 0 0 / 100% 1px no-repeat,
    linear-gradient(#ccc, #ccc) 100% 50px / 9px 1px no-repeat,
    repeating-linear-gradient(180deg, #ccc 0 1px, transparent 1px 10px) 100% 0 / 5px 100% no-repeat;
}

.ruler-v em {
  display: block;
  padding-top: 4px;
  writing-mode: vertical-rl;
  transform: rotate(180deg);
  width: 12px;
  height: 26px;
  font-style: normal;
  font-size: 10px;
  line-height: 12px;
  color: #999;
  text-align: right;
}

.canvas {
  flex: 1;
  position: relative;
  background: white;
}

.note-badge {
  width: 16px;
  height: 17px;
  background: #ffff4d;
  display: flex;
  align-items: center;
  justify-content: center;
  font-size: 10px;
  color: #333;
}

.canvas-badge {
  position: absolute;
  left: 327px;
  top: 178px;
  width: 14px;
  height: 14px;
  font-size: 9px;
}

/* preferences dialog */
.dialog {
  position: absolute;
  left: 407px;
  top: 138px;
  width: 550px;
  background: white;
  border: 1px solid #e6e6e6;
  box-shadow: 0 0 3px rgba(0, 0, 0, 0.08);
}

.dialog-title {
  height: 29px;
  background: #f3f3f3;
  display: flex;
  align-items: center;
  padding-left: 16px;
  gap: 11px;
  font-size: 13px;
  color: #444;
}

.dialog-close {
  margin-left: auto;
  margin-right: 9px;
}

.dialog-tabs {
  height: 30px;
  display: flex;
  border-bottom: 1px solid #ccc;
}

.dialog-tab {
  height: 30px;
  background: #f3f3f3;
  border: 1px solid #d4d4d4;
  border-left: none;
  display: flex;
  align-items: center;
  justify-content: center;
  font-size: 14px;
  color: #555;
}

.dialog-tab.active {
  background: white;
  border-bottom-color: white;
  color: #444;
}

.w-canvas { width: 70px; border-left: 1px solid #d4d4d4; }
.w-grid { width: 51px; }
.w-guides { width: 68px; }
.w-snap { width: 107px; }
.w-masters { width: 74px; }
.w-backups { width: 77px; }

.dialog-body {
  padding: 7px 15px 15px;
}

.check-row {
  height: 25px;
  display: flex;
  align-items: center;
  gap: 9px;
  font-size: 14.4px;
  color: #555;
}

.check {
  width: 12px;
  height: 12px;
  border: 1px solid #999;
  flex: none;
}

.check.on {
  background: #12a0d8;
  border: none;
}

.dialog-heading {
  font-size: 10px;
  line-height: 14px;
  font-weight: bold;
  letter-spacing: 0.1px;
  color: #999;
}

.thumbs-heading {
  margin-top: 7px;
}

.sub-checks {
  margin-top: 4px;
  padding-left: 10px;
}

.appearance-heading {
  margin-top: 16px;
}

.appearance-select {
  width: 139px;
  height: 26px;
  border-bottom: 1px solid #888;
  display: flex;
  justify-content: flex-end;
  padding-top: 6px;
}

.dialog-footer {
  margin-top: 28px;
  border-top: 1px solid #e6e6e6;
  padding-top: 15px;
  display: flex;
  justify-content: flex-end;
}

.done-btn {
  width: 104px;
  height: 24px;
  background: #0a94e0;
  color: white;
  border: none;
  border-radius: 2px;
  font-size: 14px;
}

/* right panel */
.right-panel {
  width: 260px;
  flex: none;
  border-left: 1px solid #ccc;
}

.right-tabs {
  padding-left: 13px;
}

.right-tabs .panel-tab {
  margin-right: 35px;
}

.right-tabs .panel-tab.active {
  margin-right: 0;
  width: 39px;
}

.tab-dot {
  width: 5px;
  height: 5px;
  margin: 18px 0 0 2px;
  border-radius: 50%;
  background: #1a94d0;
}

.page-head {
  height: 44px;
  padding: 0 13px;
  border-bottom: 1px solid #e6e6e6;
  display: flex;
  align-items: center;
  justify-content: space-between;
  font-size: 17px;
  color: #444;
}

.overview-box {
  height: 88px;
  padding: 29px 13px 0;
  border-bottom: 3px solid #e8e8e8;
}

.note-input {
  height: 25px;
  width: 231px;
  border-bottom: 1px solid #888;
  font-size: 14px;
  line-height: 20px;
  color: #ccc;
}

.note-block {
  padding: 16px 13px 0;
}

.note-head {
  display: flex;
  align-items: center;
  justify-content: space-between;
}

.note-widget {
  margin-left: auto;
  margin-right: 13px;
  margin-top: 2px;
  font-size: 12px;
  color: #5a2a6a;
}

.note-head svg {
  margin: -5px -1px 0 0;
}

.note-title {
  margin-top: 13px;
  font-size: 10px;
  line-height: 14px;
  color: #444;
}

.note-value {
  margin-top: 4px;
  font-size: 14px;
  line-height: 18px;
  color: #888;
}

.note-assign {
  margin-top: 40px;
  display: flex;
  align-items: center;
  justify-content: space-between;
  width: 236px;
  font-size: 12.5px;
  color: #999;
}

.note-swatch {
  width: 16px;
  height: 17px;
  background: #ccc;
}

.note-empty {
  margin-top: 30px;
}
```
